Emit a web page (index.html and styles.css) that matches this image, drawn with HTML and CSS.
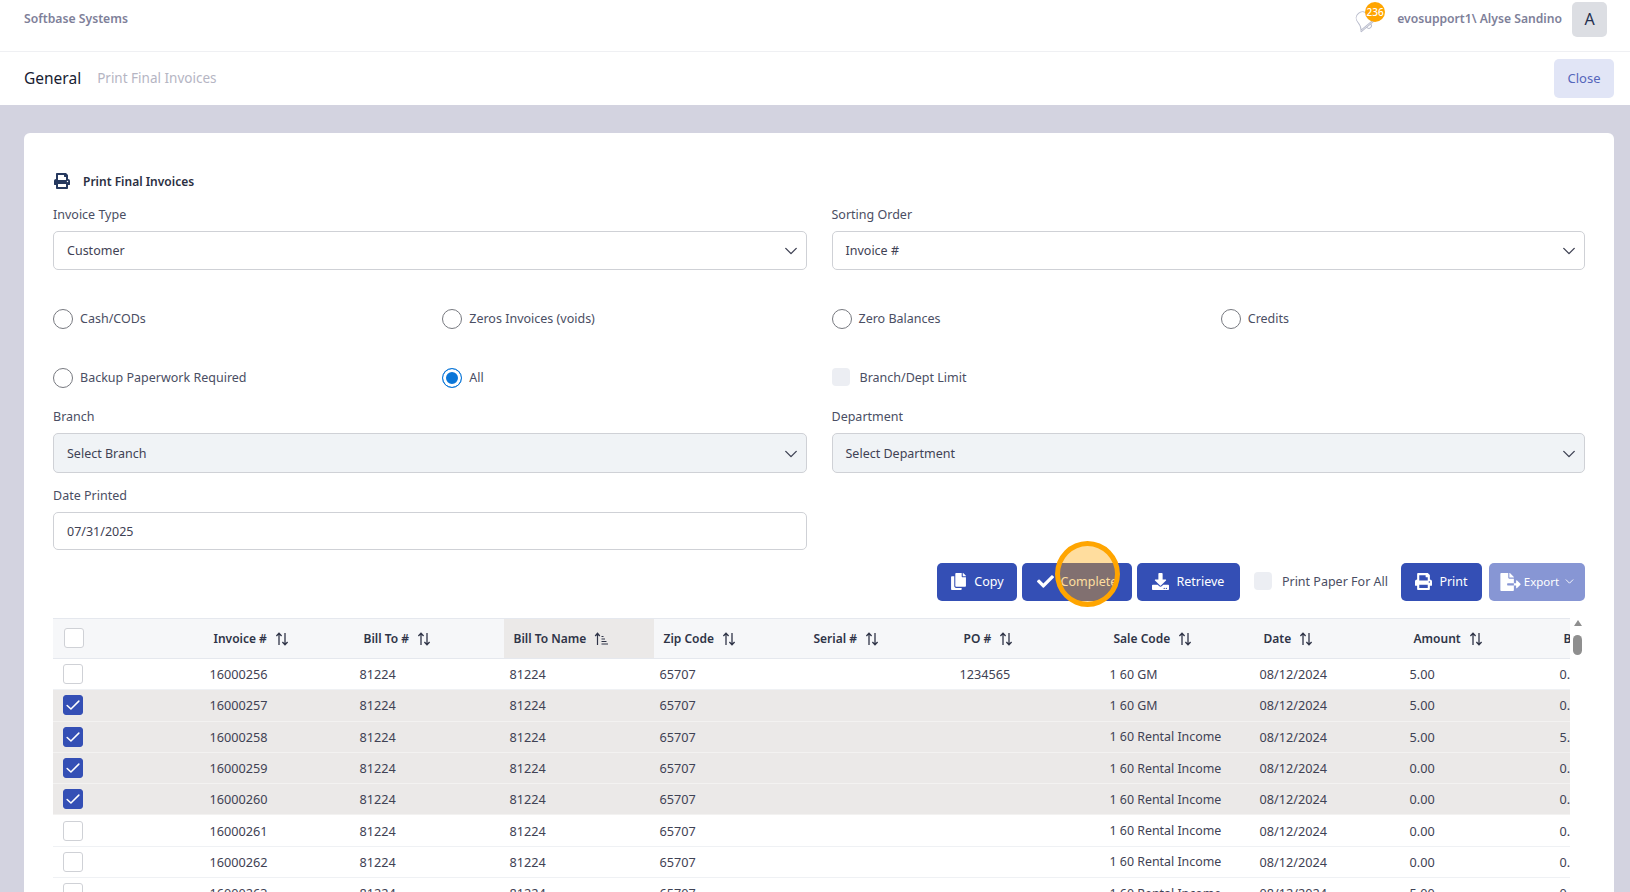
FILE: index.html
```html
<!DOCTYPE html>
<html lang="en">
<head>
<meta charset="utf-8">
<title>Print Final Invoices</title>
<link rel="stylesheet" href="styles.css">
</head>
<body>
<svg class="defs" width="0" height="0" aria-hidden="true">
  <symbol id="i-print" viewBox="0 0 512 512"><path fill="currentColor" d="M448 192V77.25c0-8.49-3.37-16.62-9.37-22.63L393.37 9.37c-6-6-14.14-9.37-22.63-9.37H96C78.33 0 64 14.33 64 32v160c-35.35 0-64 28.65-64 64v112c0 8.84 7.16 16 16 16h48v96c0 17.67 14.33 32 32 32h320c17.67 0 32-14.33 32-32v-96h48c8.84 0 16-7.16 16-16V256c0-35.35-28.65-64-64-64zm-64 256H128v-96h256v96zm0-224H128V64h192v48c0 8.84 7.16 16 16 16h48v96zm48 72c-13.25 0-24-10.75-24-24 0-13.26 10.75-24 24-24s24 10.74 24 24c0 13.25-10.75 24-24 24z"/></symbol>
  <symbol id="i-copy" viewBox="0 0 448 512"><path fill="currentColor" d="M320 448v40c0 13.255-10.745 24-24 24H24c-13.255 0-24-10.745-24-24V120c0-13.255 10.745-24 24-24h72v296c0 30.879 25.121 56 56 56h168zm0-344V0H152c-13.255 0-24 10.745-24 24v368c0 13.255 10.745 24 24 24h272c13.255 0 24-10.745 24-24V128H344c-13.2 0-24-10.8-24-24zm120.971-31.029L375.029 7.029A24 24 0 0 0 358.059 0H352v96h96v-6.059a24 24 0 0 0-7.029-16.97z"/></symbol>
  <symbol id="i-check" viewBox="0 0 512 512"><path fill="currentColor" d="M173.898 439.404l-166.4-166.4c-9.997-9.997-9.997-26.206 0-36.204l36.203-36.204c9.997-9.998 26.207-9.998 36.204 0L192 312.69 432.095 72.596c9.997-9.997 26.207-9.997 36.204 0l36.203 36.204c9.997 9.997 9.997 26.206 0 36.204l-294.4 294.401c-9.998 9.997-26.207 9.997-36.204-.001z"/></symbol>
  <symbol id="i-download" viewBox="0 0 512 512"><path fill="currentColor" d="M216 0h80c13.3 0 24 10.7 24 24v168h87.7c17.8 0 26.7 21.5 14.1 34.1L269.7 378.3c-7.5 7.5-19.8 7.5-27.3 0L90.1 226.1c-12.6-12.6-3.7-34.1 14.1-34.1H192V24c0-13.3 10.7-24 24-24zm296 376v112c0 13.3-10.7 24-24 24H24c-13.3 0-24-10.7-24-24V376c0-13.3 10.7-24 24-24h146.7l49 49c20.1 20.1 52.5 20.1 72.6 0l49-49H488c13.3 0 24 10.7 24 24zm-124 88c0-11-9-20-20-20s-20 9-20 20 9 20 20 20 20-9 20-20zm64 0c0-11-9-20-20-20s-20 9-20 20 9 20 20 20 20-9 20-20z"/></symbol>
  <symbol id="i-export" viewBox="0 0 576 512"><path fill="currentColor" d="M384 121.9c0-6.3-2.5-12.4-7-16.9L279.1 7c-4.5-4.5-10.6-7-17-7H256v128h128zM571 308l-95.7-96.4c-10.1-10.1-27.4-3-27.4 11.3V288h-64v64h64v65.2c0 14.3 17.3 21.4 27.4 11.3L571 332c6.6-6.6 6.6-17.4 0-24zm-379 28v-32c0-8.8 7.2-16 16-16h176V160H248c-13.2 0-24-10.8-24-24V0H24C10.7 0 0 10.7 0 24v464c0 13.3 10.7 24 24 24h336c13.3 0 24-10.7 24-24V352H208c-8.8 0-16-7.2-16-16z"/></symbol>
  <symbol id="i-chev" viewBox="0 0 16 16"><path fill="none" stroke="currentColor" stroke-width="1.6" stroke-linecap="round" stroke-linejoin="round" d="M2 5l6 6 6-6"/></symbol>
  <symbol id="i-sort" viewBox="0 0 14 14"><path fill="none" stroke="currentColor" stroke-width="1.3" d="M4 13V1.5M1.4 4L4 1.3 6.6 4M10 1v11.5M7.4 10l2.6 2.7 2.6-2.7"/></symbol>
  <symbol id="i-sorted" viewBox="0 0 14 14"><path fill="none" stroke="currentColor" stroke-width="1.2" d="M3.5 13V1.5M1.2 4l2.3-2.7L5.8 4M7.5 4.5h2M7.5 7h3.5M7.500 9.500h5M7.500 12h6.500"/></symbol>
  <symbol id="i-tick" viewBox="0 0 20 20"><path fill="none" stroke="currentColor" stroke-width="1.700" stroke-linecap="round" stroke-linejoin="round" d="M3.500 10.500l4.200 4 8.800-8.800"/></symbol>
</svg>

<header class="topbar">
  <span class="brand">Softbase Systems</span>
  <div class="user">
    <span class="bell">
      <svg class="bell-icon" viewBox="0 0 24 24" width="25" height="25" aria-hidden="true"><path fill="none" stroke="#b9bccc" stroke-width="0.9" stroke-linejoin="round" d="M12 3c-3.600 0-6 2.600-6 6.200 0 4.200-1 6.200-2.500 7.800h17c-1.500-1.600-2.500-3.600-2.500-7.800C18 5.600 15.600 3 12 3zM2.800 17v1.300h18.400V17M9.500 18.300c0 1.500 1.100 2.700 2.500 2.700s2.500-1.200 2.500-2.700"/></svg>
      <span class="badge">236</span>
    </span>
    <span class="user-name">evosupport1\ Alyse Sandino</span>
    <span class="avatar">A</span>
  </div>
</header>

<section class="subbar">
  <div class="crumbs">
    <span class="crumb-main">General</span>
    <span class="crumb-sub">Print Final Invoices</span>
  </div>
  <button class="close-btn" type="button">Close</button>
</section>

<main class="page">
  <div class="card">
    <h1 class="card-title"><svg class="title-icon"><use href="#i-print"/></svg>Print Final Invoices</h1>

    <div class="two-col">
      <div class="field">
        <span class="label">Invoice Type</span>
        <div class="select"><span>Customer</span><svg class="chev"><use href="#i-chev"/></svg></div>
      </div>
      <div class="field">
        <span class="label">Sorting Order</span>
        <div class="select"><span>Invoice #</span><svg class="chev"><use href="#i-chev"/></svg></div>
      </div>
    </div>

    <div class="options">
      <label class="option"><span class="radio"></span>Cash/CODs</label>
      <label class="option"><span class="radio"></span>Zeros Invoices (voids)</label>
      <label class="option"><span class="radio"></span>Zero Balances</label>
      <label class="option"><span class="radio"></span>Credits</label>
      <label class="option"><span class="radio"></span>Backup Paperwork Required</label>
      <label class="option"><span class="radio radio-on"></span>All</label>
      <label class="option"><span class="soft-check"></span>Branch/Dept Limit</label>
    </div>

    <div class="two-col branch-row">
      <div class="field">
        <span class="label">Branch</span>
        <div class="select select-off"><span>Select Branch</span><svg class="chev"><use href="#i-chev"/></svg></div>
      </div>
      <div class="field">
        <span class="label">Department</span>
        <div class="select select-off"><span>Select Department</span><svg class="chev"><use href="#i-chev"/></svg></div>
      </div>
    </div>

    <div class="two-col date-row">
      <div class="field">
        <span class="label">Date Printed</span>
        <div class="select date-input"><span>07/31/2025</span></div>
      </div>
    </div>

    <div class="toolbar">
      <button class="btn btn-copy" type="button"><svg class="btn-icon"><use href="#i-copy"/></svg>Copy</button>
      <button class="btn btn-complete" type="button"><svg class="btn-icon"><use href="#i-check"/></svg>Complete<span class="spot" aria-hidden="true"></span></button>
      <button class="btn btn-retrieve" type="button"><svg class="btn-icon"><use href="#i-download"/></svg>Retrieve</button>
      <label class="paper-all"><span class="soft-check"></span>Print Paper For All</label>
      <button class="btn btn-print" type="button"><svg class="btn-icon"><use href="#i-print"/></svg>Print</button>
      <button class="btn btn-export" type="button"><svg class="btn-icon export-icon"><use href="#i-export"/></svg>Export<svg class="export-chev"><use href="#i-chev"/></svg></button>
    </div>

    <div class="table-wrap">
      <div class="table-clip">
        <table class="grid">
          <colgroup>
            <col class="col-check"><col class="col"><col class="col"><col class="col"><col class="col"><col class="col"><col class="col"><col class="col"><col class="col"><col class="col"><col class="col">
          </colgroup>
          <thead>
            <tr>
              <th class="th-check"><span class="box head-box"></span></th>
              <th>Invoice #<svg class="sort"><use href="#i-sort"/></svg></th>
              <th>Bill To #<svg class="sort"><use href="#i-sort"/></svg></th>
              <th class="th-sorted">Bill To Name<svg class="sort"><use href="#i-sorted"/></svg></th>
              <th>Zip Code<svg class="sort"><use href="#i-sort"/></svg></th>
              <th>Serial #<svg class="sort"><use href="#i-sort"/></svg></th>
              <th>PO #<svg class="sort"><use href="#i-sort"/></svg></th>
              <th>Sale Code<svg class="sort"><use href="#i-sort"/></svg></th>
              <th>Date<svg class="sort"><use href="#i-sort"/></svg></th>
              <th>Amount<svg class="sort"><use href="#i-sort"/></svg></th>
              <th>Balance<svg class="sort"><use href="#i-sort"/></svg></th>
            </tr>
          </thead>
          <tbody>
            <tr><td class="td-check"><span class="box"></span></td><td>16000256</td><td>81224</td><td>81224</td><td>65707</td><td></td><td>1234565</td><td>1 60 GM</td><td>08/12/2024</td><td>5.00</td><td>0.00</td></tr>
            <tr class="sel"><td class="td-check"><span class="box box-on"><svg class="tick"><use href="#i-tick"/></svg></span></td><td>16000257</td><td>81224</td><td>81224</td><td>65707</td><td></td><td></td><td>1 60 GM</td><td>08/12/2024</td><td>5.00</td><td>0.00</td></tr>
            <tr class="sel"><td class="td-check"><span class="box box-on"><svg class="tick"><use href="#i-tick"/></svg></span></td><td>16000258</td><td>81224</td><td>81224</td><td>65707</td><td></td><td></td><td>1 60 Rental Income</td><td>08/12/2024</td><td>5.00</td><td>5.00</td></tr>
            <tr class="sel"><td class="td-check"><span class="box box-on"><svg class="tick"><use href="#i-tick"/></svg></span></td><td>16000259</td><td>81224</td><td>81224</td><td>65707</td><td></td><td></td><td>1 60 Rental Income</td><td>08/12/2024</td><td>0.00</td><td>0.00</td></tr>
            <tr class="sel"><td class="td-check"><span class="box box-on"><svg class="tick"><use href="#i-tick"/></svg></span></td><td>16000260</td><td>81224</td><td>81224</td><td>65707</td><td></td><td></td><td>1 60 Rental Income</td><td>08/12/2024</td><td>0.00</td><td>0.00</td></tr>
            <tr><td class="td-check"><span class="box"></span></td><td>16000261</td><td>81224</td><td>81224</td><td>65707</td><td></td><td></td><td>1 60 Rental Income</td><td>08/12/2024</td><td>0.00</td><td>0.00</td></tr>
            <tr><td class="td-check"><span class="box"></span></td><td>16000262</td><td>81224</td><td>81224</td><td>65707</td><td></td><td></td><td>1 60 Rental Income</td><td>08/12/2024</td><td>0.00</td><td>0.00</td></tr>
            <tr><td class="td-check"><span class="box"></span></td><td>16000263</td><td>81224</td><td>81224</td><td>65707</td><td></td><td></td><td>1 60 Rental Income</td><td>08/12/2024</td><td>5.00</td><td>0.00</td></tr>
          </tbody>
        </table>
      </div>
      <div class="scrollbar"><span class="scroll-up"></span><span class="scroll-thumb"></span></div>
    </div>
  </div>
</main>
</body>
</html>
```

FILE: styles.css
```css
* { box-sizing: border-box; }
html, body { margin: 0; height: 892px; overflow: hidden; }
body {
  font-family: "Noto Sans", "Open Sans", sans-serif;
  font-size: 12.500px;
  color: #3f4254;
  background: #d3d3e0;
}
.defs { position: absolute; }

.topbar {
  height: 52px;
  background: #fff;
  border-bottom: 1px solid #eff0f3;
  display: flex;
  justify-content: space-between;
  padding: 3px 24px 0;
}
.brand { font-size: 12.200px; font-weight: 600; color: #7e8099; line-height: 32px; }
.user { display: flex; align-items: flex-start; }
.bell { position: relative; width: 30px; height: 30px; margin-right: 12px; }
.bell-icon { position: absolute; left: -3px; top: 5px; transform: rotate(-40deg); }
.badge {
  position: absolute; left: 10px; top: -1px;
  width: 20px; height: 20px; border-radius: 50%;
  background: #ffa500; color: #fff;
  font-size: 10px; line-height: 20px; text-align: center; font-weight: 500;
}
.user-name { font-size: 12.150px; font-weight: 600; color: #7e8099; line-height: 32px; margin-right: 10px; }
.avatar {
  width: 35px; height: 35px; border-radius: 5px;
  background: #dcdee3; color: #24304f;
  font-size: 16px; line-height: 34px; text-align: center;
  margin-right: -1px; margin-top: -1px;
}

.subbar {
  height: 53px;
  background: #fff;
  display: flex;
  justify-content: space-between;
  align-items: center;
  padding: 0 16px 0 24px;
}
.crumbs { display: flex; align-items: center; gap: 16px; padding-bottom: 1px; }
.crumb-main { font-size: 15.500px; color: #181c32; line-height: 20px; }
.crumb-sub { font-size: 13.500px; color: #b5b5c3; line-height: 20px; }
.close-btn {
  width: 60px; height: 39px; border: 0; border-radius: 5px;
  background: #e1e5f6; color: #5566bb;
  font: inherit; font-size: 13px;
  padding: 0 0 2px;
}

.page { padding: 28px 16px 0 24px; }
.card {
  background: #fff;
  border-radius: 6px;
  height: 800px;
  padding: 38px 29px 0 29px;
}
.card-title {
  margin: 0;
  height: 20px;
  display: flex; align-items: center;
  font-size: 12px; font-weight: 600; color: #2b2f42;
}
.title-icon { width: 16px; height: 16px; color: #26395f; margin: 0 13px 0 1px; }

.two-col { display: grid; grid-template-columns: 1fr 1fr; column-gap: 25px; margin-top: 13px; }
.field { display: flex; flex-direction: column; }
.label { height: 20px; line-height: 22px; color: #4a4e63; margin-bottom: 7px; }
.select {
  height: 39px;
  border: 1px solid #cfd1d6;
  border-radius: 5px;
  display: flex; align-items: center; justify-content: space-between;
  padding: 0 8px 0 13px;
  color: #3f4254;
  background: #fff;
}
.select-off { background: #f0f3f6; height: 40px; }
.date-input { height: 38px; }
.chev { width: 14px; height: 14px; color: #3f4254; margin-top: 1px; }

.options {
  display: grid;
  grid-template-columns: repeat(4, 1fr);
  column-gap: 25px;
  row-gap: 39px;
  margin-top: 39px;
}
.option { height: 20px; padding-bottom: 2px; display: flex; align-items: center; color: #4a4e63; }
.radio {
  width: 20px; height: 20px; border-radius: 50%;
  border: 1px solid #77797f;
  margin: 0 7px -2px 0;
  background: #fff;
}
.radio-on {
  border-color: #0a76d8;
  background: #0a76d8;
  box-shadow: inset 0 0 0 3px #fff;
}
.soft-check {
  width: 18px; height: 18px; border-radius: 4px;
  background: #eceef3;
  margin: 0 10px 0 0;
}

.branch-row { margin-top: 19px; }
.branch-row .label { margin-bottom: 6px; line-height: 20px; }
.date-row { margin-top: 12px; }
.date-row .label { margin-bottom: 7px; }

.toolbar {
  margin-top: 13px;
  height: 38px;
  display: flex;
  justify-content: flex-end;
  align-items: center;
}
.btn {
  height: 38px;
  border: 0; border-radius: 5px;
  background: #344fb5; color: #fff;
  font: inherit; font-size: 12.500px;
  display: flex; align-items: center; justify-content: center;
  position: relative;
  padding: 0 0 1px;
}
.btn-icon { width: 17px; height: 17px; margin-right: 7px; }
.btn-copy { width: 80px; margin-right: 5px; }
.btn-complete { width: 110px; margin-right: 5px; }
.btn-retrieve { width: 103px; margin-right: 14px; }
.btn-print { width: 81px; margin-right: 7px; }
.btn-export { width: 96px; background: #8796d4; font-size: 11.500px; }
.export-icon { width: 21px; height: 18px; margin-right: 3px; }
.export-chev { width: 9px; height: 9px; margin-left: 6px; }
.paper-all { display: flex; align-items: center; color: #4a4e63; margin-right: 13px; padding-bottom: 2px; }
.spot {
  position: absolute; left: 33px; top: -22px;
  width: 65px; height: 66px; border-radius: 50%;
  border: 5px solid #ffa500;
  background: rgba(255, 165, 0, .38);
}

.table-wrap { margin-top: 17px; display: flex; }
.table-clip { width: 1517px; overflow: hidden; height: 300px; }
.grid { border-collapse: collapse; table-layout: fixed; width: 1651px; }
.col-check { width: 151px; }
.col { width: 150px; }
.grid th {
  height: 40px;
  background: #f6f7f9;
  border-top: 1px solid #e5e8ee;
  border-bottom: 1px solid #e5e8ee;
  font-size: 12px; font-weight: 600; color: #2f3447;
  text-align: left;
  padding: 0 0 1px 9.500px;
  white-space: nowrap;
}
.grid .th-sorted { background: #ebe9e8; }
.grid .th-check { padding-left: 11px; }
.sort { width: 14px; height: 14px; margin-left: 8px; vertical-align: -3px; color: #2f3447; }
.grid td {
  height: 31.300px;
  padding: 0 0 0 5.500px;
  border-bottom: 1px solid #eff1f4;
  white-space: nowrap;
  color: #3f4254;
  font-size: 12.700px;
}
.grid td:nth-child(8) { font-size: 12.400px; }
.grid .td-check { padding-left: 10px; }
.sel td { background: #ebe9e8; border-bottom-color: #f3f2f1; }
.box {
  display: block;
  width: 20px; height: 20px; border-radius: 3px;
  border: 1px solid #cfd1d6;
  background: #fff;
}
.box-on { border-color: #344fb5; background: #344fb5; color: #fff; }
.tick { display: block; width: 18px; height: 18px; }
.scrollbar { width: 15px; display: flex; flex-direction: column; align-items: center; background: #fff; padding-top: 2px; }
.scroll-up {
  width: 0; height: 0;
  border-left: 4.500px solid transparent;
  border-right: 4.500px solid transparent;
  border-bottom: 6px solid #8f8f8f;
  margin-bottom: 9px;
}
.scroll-thumb { width: 9px; height: 20px; border-radius: 5px; background: #8f8f8f; }
```
